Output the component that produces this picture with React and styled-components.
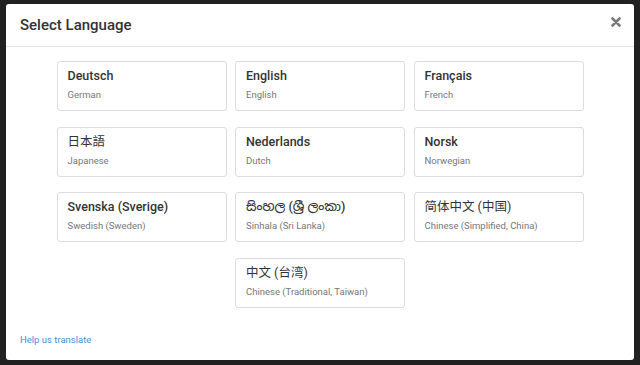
import React from "react";
import styled, { createGlobalStyle } from "styled-components";

const Global = createGlobalStyle`
  html, body { margin: 0; padding: 0; }
  body { font-family: Roboto, "Noto Sans", "Noto Sans CJK SC", sans-serif; }
  * { box-sizing: border-box; }
`;

const Backdrop = styled.div`
  width: 640px;
  height: 365px;
  background: #212121;
  padding: 4px 6px 5px 6px;
`;

const Modal = styled.div`
  height: 100%;
  background: #fff;
  border-radius: 3px;
  display: flex;
  flex-direction: column;
`;

const Header = styled.div`
  height: 43px;
  border-bottom: 1px solid #e6e6e6;
  display: flex;
  align-items: center;
  justify-content: space-between;
  padding: 0 11px 0 14px;
`;

const Title = styled.h4`
  margin: 0;
  font-size: 15px;
  font-weight: 500;
  color: #333;
  margin-top: -1px;
`;

const Close = styled.button`
  border: 0;
  background: none;
  padding: 0;
  width: 14px;
  height: 14px;
  display: flex;
  align-items: center;
  justify-content: center;
  cursor: pointer;
  margin-top: -7px;
`;

const Grid = styled.div`
  display: grid;
  grid-template-columns: repeat(3, 170px);
  grid-auto-rows: 50px;
  column-gap: 8.5px;
  row-gap: 15.6px;
  justify-content: center;
  padding-top: 14px;
`;

const Card = styled.div`
  border: 1px solid #dcdcdc;
  border-radius: 3px;
  padding: 6px 10px 0 10px;
  grid-column: ${(p) => p.$col || "auto"};
  cursor: pointer;
`;

const Name = styled.div`
  font-size: 12.5px;
  font-weight: ${(p) => (p.$cjk ? 400 : 500)};
  color: #333;
  line-height: 16px;
  font-family: Roboto, "Noto Sans", "Noto Sans Sinhala", "Noto Sans CJK SC", sans-serif;
`;

const Sub = styled.div`
  font-size: 9.5px;
  color: #777;
  margin-top: 5px;
  line-height: 12px;
`;

const Footer = styled.div`
  margin-top: auto;
  padding: 0 14px 13px 14px;
`;

const Link = styled.a`
  font-size: 9.5px;
  color: #4a8fd6;
  text-decoration: none;
  line-height: 12px;
`;

const langs = [
  { n: "Deutsch", s: "German" },
  { n: "English", s: "English" },
  { n: "Français", s: "French" },
  { n: "日本語", s: "Japanese", cjk: true },
  { n: "Nederlands", s: "Dutch" },
  { n: "Norsk", s: "Norwegian" },
  { n: "Svenska (Sverige)", s: "Swedish (Sweden)" },
  { n: "සිංහල (ශ්‍රී ලංකා)", s: "Sinhala (Sri Lanka)" },
  { n: "简体中文 (中国)", s: "Chinese (Simplified, China)", cjk: true },
  { n: "中文 (台湾)", s: "Chinese (Traditional, Taiwan)", cjk: true, col: 2 },
];

export default function App() {
  return (
    <>
      <Global />
      <Backdrop>
        <Modal>
          <Header>
            <Title>Select Language</Title>
            <Close aria-label="close">
              <svg width="10" height="10" viewBox="0 0 10 10">
                <path d="M1.5 1.5 L8.5 8.5 M8.5 1.5 L1.5 8.5" stroke="#7a7a7a" strokeWidth="2.6" strokeLinecap="round" />
              </svg>
            </Close>
          </Header>
          <Grid>
            {langs.map((l) => (
              <Card key={l.s} $col={l.col}>
                <Name $cjk={l.cjk}>{l.n}</Name>
                <Sub>{l.s}</Sub>
              </Card>
            ))}
          </Grid>
          <Footer>
            <Link href="#">Help us translate</Link>
          </Footer>
        </Modal>
      </Backdrop>
    </>
  );
}
